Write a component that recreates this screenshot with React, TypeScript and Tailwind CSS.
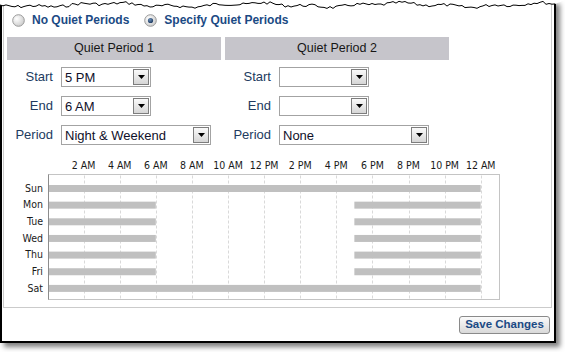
import React from 'react';

const HOUR_LABELS = ['2 AM', '4 AM', '6 AM', '8 AM', '10 AM', '12 PM', '2 PM', '4 PM', '6 PM', '8 PM', '10 PM', '12 AM'];

const DAYS: { name: string; spans: [number, number][] }[] = [
  { name: 'Sun', spans: [[0, 24]] },
  { name: 'Mon', spans: [[0, 6], [17, 24]] },
  { name: 'Tue', spans: [[0, 6], [17, 24]] },
  { name: 'Wed', spans: [[0, 6], [17, 24]] },
  { name: 'Thu', spans: [[0, 6], [17, 24]] },
  { name: 'Fri', spans: [[0, 6], [17, 24]] },
  { name: 'Sat', spans: [[0, 24]] },
];

// x position of an hour inside the chart svg
const hx = (h: number) => 43.5 + 18.05 * h;

function tornEdge() {
  let seed = 7;
  const rnd = () => {
    seed = (seed * 9301 + 49297) % 233280;
    return seed / 233280;
  };
  const pts: string[] = [];
  for (let x = 0; x <= 556; x += 3) {
    const y = 5 + Math.sin(x / 23) * 1.6 + Math.sin(x / 7.3) * 0.9 + (rnd() - 0.5) * 3;
    pts.push(`${x},${y.toFixed(1)}`);
  }
  return pts;
}

function Radio({ checked }: { checked?: boolean }) {
  return (
    <svg width="13" height="13" viewBox="0 0 13 13" className="block">
      <defs>
        <radialGradient id="rfill" cx="0.35" cy="0.35" r="0.8">
          <stop offset="0" stopColor="#ffffff" />
          <stop offset="1" stopColor="#c4c4c4" />
        </radialGradient>
        <radialGradient id="rdot" cx="0.4" cy="0.35" r="0.7">
          <stop offset="0" stopColor="#6d8fb8" />
          <stop offset="1" stopColor="#17345a" />
        </radialGradient>
      </defs>
      <circle cx="6.5" cy="6.5" r="5.8" fill="url(#rfill)" stroke="#9a9a9a" strokeWidth="1" />
      {checked && <circle cx="6.5" cy="6.5" r="2.6" fill="url(#rdot)" />}
    </svg>
  );
}

function Select({ value, width }: { value: string; width: string }) {
  return (
    <div className={`flex h-[20px] items-center justify-between border border-[#a3a3a3] bg-white ${width}`}>
      <span className="pl-[3px] text-[13px] leading-none text-[#10102a]">{value}</span>
      <div className="mr-[1px] flex h-[16px] w-[16px] items-center justify-center border border-[#7d7d7d] bg-gradient-to-b from-[#fafafa] to-[#d6d6d6]">
        <svg width="7" height="4" viewBox="0 0 7 4">
          <path d="M0 0 L7 0 L3.5 4 Z" fill="#000" />
        </svg>
      </div>
    </div>
  );
}

function Period({ title, width, start, end, period }: { title: string; width: string; start: string; end: string; period: string }) {
  const rows = [
    { label: 'Start', value: start, w: 'w-[90px]' },
    { label: 'End', value: end, w: 'w-[90px]' },
    { label: 'Period', value: period, w: 'w-[150px]' },
  ];
  return (
    <div className={width}>
      <div className="flex h-[23px] items-center justify-center bg-[#c6c5cb] text-[12.5px] text-[#161616]">{title}</div>
      <div className="mt-[7px] flex flex-col gap-[9px]">
        {rows.map((r) => (
          <div key={r.label} className="flex h-[20px] items-center">
            <span className="w-[46px] text-right text-[13px] text-[#223b60]">{r.label}</span>
            <div className="ml-[8px]">
              <Select value={r.value} width={r.w} />
            </div>
          </div>
        ))}
      </div>
    </div>
  );
}

function Chart() {
  const top = 24.5;
  const bottom = 149.5;
  const left = 44.5;
  const right = 495.5;
  return (
    <svg width="500" height="152" viewBox="0 0 500 152" className="block" style={{ fontFamily: '"DejaVu Sans Condensed", "DejaVu Sans", sans-serif' }}>
      <rect x={left} y={top} width={right - left} height={bottom - top} fill="#fff" stroke="#c4c4c4" />
      {HOUR_LABELS.map((_, i) => {
        const x = Math.round(hx((i + 1) * 2)) + 0.5;
        return <line key={i} x1={x} x2={x} y1={top + 1} y2={bottom} stroke="#d9d9d9" strokeDasharray="3 2" />;
      })}
      <line x1={left} x2={left} y1={top} y2={bottom} stroke="#8c8c8c" />
      {HOUR_LABELS.map((l, i) => (
        <text key={l} x={hx((i + 1) * 2)} y={19} textAnchor="middle" fontSize="10.5" fill="#1a1a1a">
          {l}
        </text>
      ))}
      {DAYS.map((d, i) => {
        const y = 35 + i * 16.65;
        return (
          <g key={d.name}>
            <text x={39} y={y + 6.8} textAnchor="end" fontSize="10.5" fill="#1a1a1a">
              {d.name}
            </text>
            {d.spans.map(([a, b]) => {
              const x1 = a === 0 ? 45 : hx(a);
              return <rect key={a} x={x1} y={y} width={hx(b) - x1} height={7} fill="#c0c0c0" />;
            })}
          </g>
        );
      })}
    </svg>
  );
}

export default function App() {
  const pts = tornEdge();
  return (
    <div className="relative h-[352px] w-[565px] overflow-hidden bg-white" style={{ fontFamily: '"Liberation Sans", Arial, sans-serif' }}>
      <div className="h-[343px] w-[556px] border-2 border-t-0 border-black shadow-[4px_4px_5px_rgba(0,0,0,0.5)]">
        <div className="ml-[1px] h-[308px] w-[549px] border border-t-0 border-[#cbcbcb] pt-[12px]">
          <div className="flex h-[16px] items-center pl-[8px]">
            <Radio />
            <span className="ml-[7px] text-[12px] font-bold text-[#1b4a84]">No Quiet Periods</span>
            <div className="ml-[15px]">
              <Radio checked />
            </div>
            <span className="ml-[7px] text-[12px] font-bold text-[#1b4a84]">Specify Quiet Periods</span>
          </div>
          <div className="ml-[3px] mt-[9px] flex gap-[4px]">
            <Period title="Quiet Period 1" width="w-[214px]" start="5 PM" end="6 AM" period="Night & Weekend" />
            <Period title="Quiet Period 2" width="w-[224px]" start="" end="" period="None" />
          </div>
          <div className="mt-[5px]">
            <Chart />
          </div>
        </div>
        <div className="mr-[4px] mt-[8px] flex justify-end">
          <button className="flex h-[18px] w-[91px] items-center justify-center rounded-[3px] border border-[#8a8a8a] bg-gradient-to-b from-[#fbfbfb] to-[#d9d9d9] text-[11.5px] font-bold text-[#1b4a84]">
            Save Changes
          </button>
        </div>
      </div>
      <svg className="absolute left-0 top-0" width="565" height="12" viewBox="0 0 565 12">
        <path d={`M0,0 L${pts.join(' L')} L565,0 Z`} fill="#fff" />
        <polyline points={pts.join(' ')} fill="none" stroke="#000" strokeWidth="1" />
      </svg>
    </div>
  );
}
